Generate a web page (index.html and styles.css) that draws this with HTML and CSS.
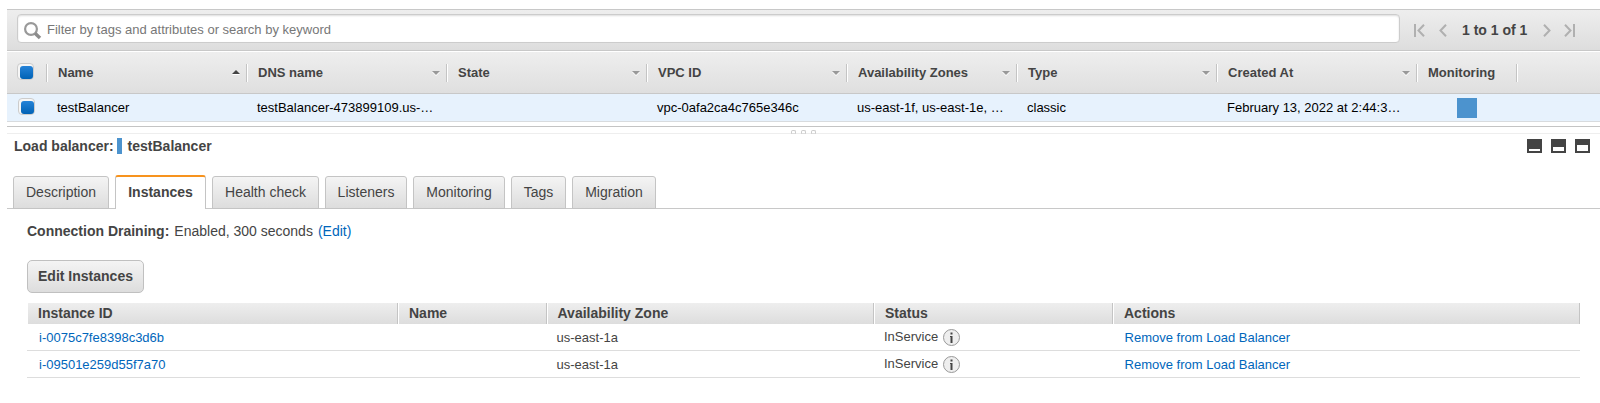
FILE: index.html
```html
<!DOCTYPE html>
<html lang="en">
<head>
<meta charset="utf-8">
<title>Load Balancers</title>
<link rel="stylesheet" href="styles.css">
</head>
<body>
<main class="console">
  <div class="toolbar">
    <div class="search">
      <svg class="search-icon" width="18" height="18" viewBox="0 0 18 18"><circle cx="7" cy="7" r="5.900" fill="none" stroke="#999" stroke-width="2.200"/><path d="M11 11.200L16 16" fill="none" stroke="#8c8c8c" stroke-width="3.400"/></svg>
      <span>Filter by tags and attributes or search by keyword</span>
    </div>
    <div class="pager">
      <svg width="11" height="13" viewBox="0 0 11 13"><path d="M1 0V13M10 .8L4.500 6.500L10 12.200"/></svg>
      <svg class="prev" width="8" height="13" viewBox="0 0 8 13"><path d="M7 .8L1.500 6.500L7 12.200"/></svg>
      <b>1 to 1 of 1</b>
      <svg class="next" width="8" height="13" viewBox="0 0 8 13"><path d="M1 .8L6.500 6.500L1 12.200"/></svg>
      <svg width="11" height="13" viewBox="0 0 11 13"><path d="M10 0V13M1 .8L6.500 6.500L1 12.200"/></svg>
    </div>
  </div>
  <div class="grid head">
    <div class="cell"><i class="check"></i></div>
    <div class="cell">Name<i class="asc"></i></div>
    <div class="cell">DNS name<i class="sort"></i></div>
    <div class="cell">State<i class="sort"></i></div>
    <div class="cell">VPC ID<i class="sort"></i></div>
    <div class="cell">Availability Zones<i class="sort"></i></div>
    <div class="cell">Type<i class="sort"></i></div>
    <div class="cell">Created At<i class="sort"></i></div>
    <div class="cell">Monitoring</div>
  </div>
  <div class="grid row">
    <div><i class="check"></i></div>
    <div>testBalancer</div>
    <div>testBalancer-473899109.us-…</div>
    <div></div>
    <div>vpc-0afa2ca4c765e346c</div>
    <div>us-east-1f, us-east-1e, …</div>
    <div>classic</div>
    <div>February 13, 2022 at 2:44:3…</div>
    <div><i class="swatch"></i></div>
  </div>
  <div class="splitter"><div class="grip"><i></i><i></i><i></i></div></div>
  <div class="title">
    <b>Load balancer:</b><i class="bar"></i><b>testBalancer</b>
    <div class="panes"><i class="pane low"></i><i class="pane mid"></i><i class="pane high"></i></div>
  </div>
  <nav class="tabs">
    <div class="tab t1">Description</div>
    <div class="tab t2 active">Instances</div>
    <div class="tab t3">Health check</div>
    <div class="tab t4">Listeners</div>
    <div class="tab t5">Monitoring</div>
    <div class="tab t6">Tags</div>
    <div class="tab t7">Migration</div>
  </nav>
  <section class="details">
    <div class="draining"><b>Connection Draining:</b><span>Enabled, 300 seconds</span><a>(Edit)</a></div>
    <button class="edit">Edit Instances</button>
    <div class="list list-head"><div>Instance ID</div><div>Name</div><div class="zone">Availability Zone</div><div>Status</div><div>Actions</div></div>
    <div class="list list-row"><a>i-0075c7fe8398c3d6b</a><div></div><div>us-east-1a</div><div class="status"><span>InService</span><svg width="17" height="17" viewBox="0 0 17 17"><circle cx="8.500" cy="8.500" r="8" fill="#eee" stroke="#999"/><path d="M7.500 3.500h2v2h-2zM7 7h2.500v7h-2V8H7z" fill="#444"/></svg></div><a class="remove">Remove from Load Balancer</a></div>
    <div class="list list-row"><a>i-09501e259d55f7a70</a><div></div><div>us-east-1a</div><div class="status"><span>InService</span><svg width="17" height="17" viewBox="0 0 17 17"><circle cx="8.500" cy="8.500" r="8" fill="#eee" stroke="#999"/><path d="M7.500 3.500h2v2h-2zM7 7h2.500v7h-2V8H7z" fill="#444"/></svg></div><a class="remove">Remove from Load Balancer</a></div>
  </section>
</main>
</body>
</html>
```
FILE: styles.css
```css
* { box-sizing: border-box; }
body { margin: 0; background: #fff; color: #444; font: 14px/16px "Liberation Sans", Arial, sans-serif; overflow: hidden; }
i { display: block; font-style: normal; }
svg { display: block; flex: none; }
a { color: #0066bb; }
.console { padding: 9px 0 0 7px; height: 403px; }

.toolbar { display: flex; align-items: flex-start; height: 42px; padding: 4px 0 0 10px; border-top: 1px solid #c8c8c8; border-bottom: 1px solid #c8c8c8; background: linear-gradient(#eee, #ddd); }
.search { display: flex; align-items: center; width: 1383px; height: 29px; padding: 2px 0 0 6px; border: 1px solid #ccc; border-radius: 4px; background: #fff; box-shadow: inset 0 1px 2px #ddd; color: #777; font-size: 13px; }
.search-icon { margin-right: 5px; margin-top: 2px; }
.pager { display: flex; align-items: center; height: 13px; margin: 10px 0 0 14px; }
.pager path { fill: none; stroke: #b0b0b0; stroke-width: 2; }
.pager b { margin-top: -2px; }
.pager .prev { margin: 0 15px 0 14px; }
.pager .next { margin: 0 13px 0 16px; }

.grid { display: grid; grid-template-columns: 41px 200px 200px 200px 200px 170px 200px 200px 100px; font-size: 13px; }
.head { height: 43px; padding-top: 12px; border-top: 1px solid #fff; border-bottom: 1px solid #c8c8c8; background: linear-gradient(#eee, #dfdfdf); font-weight: bold; }
.cell { display: flex; justify-content: space-between; height: 18px; padding: 1px 7px 0 10px; border-right: 1px solid #fff; box-shadow: inset -1px 0 #c4c4c4; }
.check { position: relative; width: 17px; height: 17px; flex: none; border: 1px solid #ccc; border-radius: 4px; background: #f6f6f6; }
.check::after { content: ""; position: absolute; left: 2px; top: 2px; width: 13px; height: 13px; border-radius: 3px; background: linear-gradient(#2583d8, #0062b5); }
.head .check { margin-top: -2px; }
.sort { border: 4px solid transparent; border-top-color: #999; border-bottom: 0; height: 4px; margin-top: 6px; filter: drop-shadow(0 1px #fff); }
.asc { border: 4px solid transparent; border-bottom-color: #444; border-top: 0; height: 4px; margin-top: 5px; filter: drop-shadow(0 1px #fff); }
.row { height: 28px; border-bottom: 1px solid #d8dbde; background: #e7f2fd; color: #000; line-height: 27px; }
.row > div { padding-left: 9px; }
.row > div:first-child { padding: 4px 0 0 11px; }
.swatch { width: 20px; height: 20px; margin: 4px 0 0 30px; background: #4c93ce; }

.splitter { height: 12px; padding-top: 4px; border-bottom: 1px solid #eee; }
.grip { display: flex; gap: 5px; height: 8px; border-top: 1px solid #c4c4c4; padding: 3px 0 0 784px; }
.grip i { width: 5px; height: 4px; border: 1px solid #ccc; border-bottom-color: #ddd; border-radius: 2px 2px 0 0; background: #fff; }

.title { display: flex; height: 41px; padding: 4px 10px 0 7px; line-height: 17px; }
.bar { width: 5px; height: 16px; margin: 0 6px 0 3px; background: #4c93ce; }
.panes { display: flex; gap: 9px; margin: 1px 0 0 auto; }
.pane { width: 15px; height: 14px; border: 2px solid #444; }
.low { border-top-width: 10px; }
.mid { border-top-width: 8px; }
.high { border-top-width: 6px; }

.tabs { display: flex; align-items: flex-end; gap: 6px; height: 34px; padding-left: 6px; box-shadow: inset 0 -1px #c8c8c8; }
.tab { height: 33px; border: 1px solid #c4c4c4; border-radius: 3px 3px 0 0; background: linear-gradient(#f4f4f4, #ddd); line-height: 31px; text-align: center; }
.active { height: 34px; border-top: 2px solid #f7931e; border-bottom: 0; background: #fff; font-weight: bold; line-height: 31px; }
.t1 { width: 96px; }
.t2 { width: 91px; }
.t3 { width: 107px; }
.t4 { width: 82px; }
.t5 { width: 92px; }
.t6 { width: 55px; }
.t7 { width: 84px; }

.details { padding: 14px 20px 0; }
.draining { display: flex; gap: 5px; height: 37px; line-height: 17px; }
.edit { display: block; width: 117px; height: 33px; margin-bottom: 10px; padding: 0 0 2px; border: 1px solid #c0c0c0; border-radius: 5px; background: linear-gradient(#f4f4f4, #ddd); color: #444; font: bold 14px "Liberation Sans", Arial, sans-serif; }
.list { display: grid; grid-template-columns: 371px 149px 327px 239px 467px; width: 1553px; }
.list-head { height: 21px; font-weight: bold; line-height: 21px; }
.list-head div { padding-left: 10px; border-left: 1px solid #fff; border-right: 1px solid #c4c4c4; background: linear-gradient(#eee, #ddd); }
.list-head .zone { padding-left: 9.500px; }
.list-row { height: 27px; border-bottom: 1px solid #ddd; font-size: 13px; line-height: 27px; }
.list-row > * { padding-left: 9.500px; }
.list-row > a { padding-left: 12px; }
.list-row > .remove { padding-left: 11.600px; }
.list-row .status { display: flex; gap: 5px; padding-left: 10px; line-height: 25px; }
.status svg { margin-top: 5px; }
```
